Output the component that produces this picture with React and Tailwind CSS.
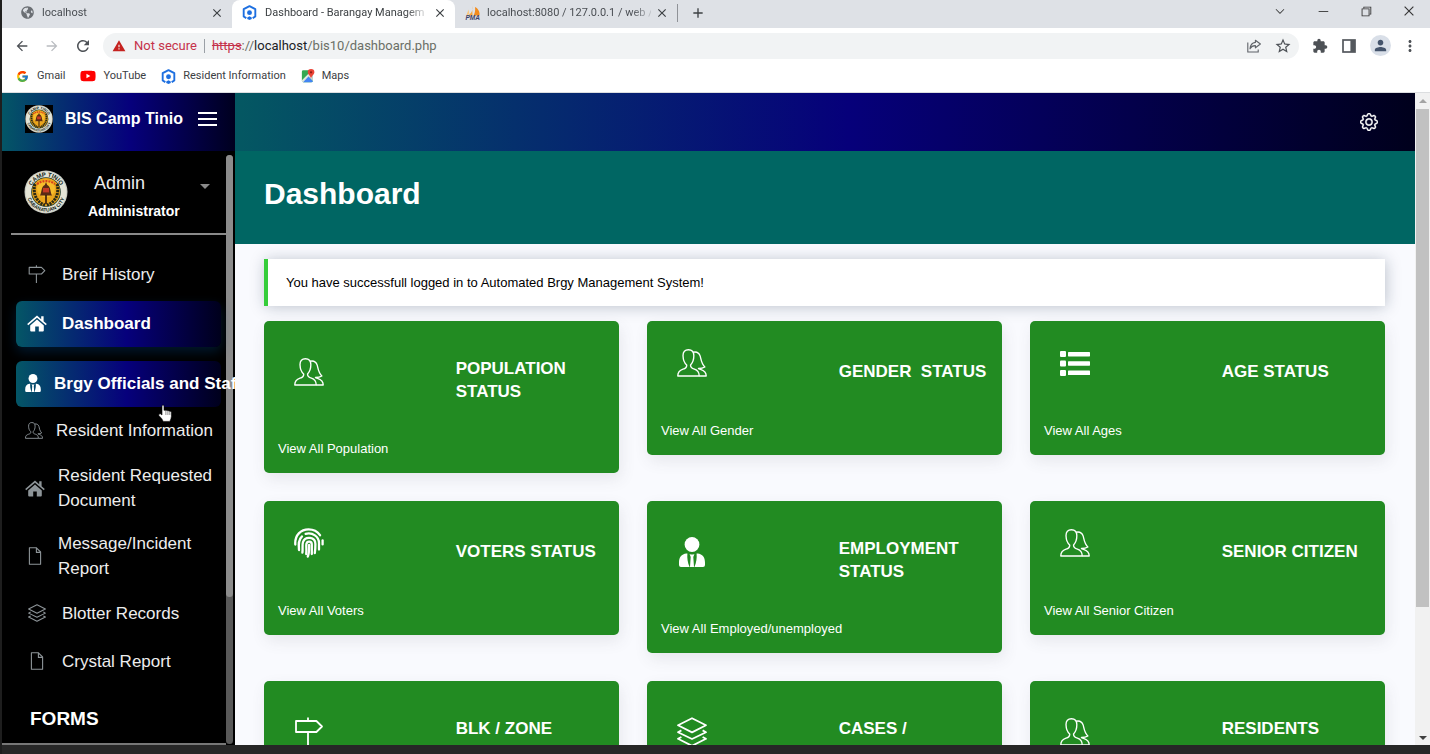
import React from "react";
import {
  MdArrowBack,
  MdArrowForward,
  MdRefresh,
  MdWarning,
  MdExtension,
  MdMoreVert,
  MdPerson,
  MdClose,
  MdAdd,
  MdStarBorder,
} from "react-icons/md";
import { FaGlobeAmericas, FaYoutube } from "react-icons/fa";
import { FcGoogle } from "react-icons/fc";
import { BsGear } from "react-icons/bs";
import {
  VscChromeMinimize,
  VscChromeRestore,
  VscChromeClose,
  VscChevronDown,
} from "react-icons/vsc";

/* ---------- icons ---------- */

function HexLogo() {
  return (
    <svg viewBox="0 0 16 16" className="size-[15px] shrink-0" aria-hidden="true">
      <path
        d="M4.6 14 L1.8 12.2 V4.4 L8 1.2 L14.2 4.4 V12.2 L11.4 14"
        fill="none"
        stroke="#1d6fe0"
        strokeWidth="2"
        strokeLinejoin="round"
      />
      <circle cx="8" cy="8.2" r="2.6" fill="#1d6fe0" />
      <path d="M5.6 13.2 L8 12 L10.4 13.2 V15 L8 16 L5.6 15 Z" fill="#1d6fe0" />
    </svg>
  );
}

function PmaLogo() {
  return (
    <svg viewBox="0 0 18 16" className="h-4 w-[18px] shrink-0" aria-hidden="true">
      <path d="M7 1 C8 5 7 8 3 10.5 H7.6 Z" fill="#f7a63a" />
      <path d="M10 2 C14 4 15 8 14.5 10.5 H8.6 C10 8 10.5 5 10 2 Z" fill="#f28b1c" />
      <path d="M3.5 4.5 L4.3 9 L1.4 10.5 Z" fill="#fbc77b" />
      <text
        x="0.5"
        y="15.4"
        fontSize="6.5"
        fontWeight="700"
        fontStyle="italic"
        fontFamily="Liberation Sans, sans-serif"
        fill="#3c3f66"
      >
        PMA
      </text>
    </svg>
  );
}

function MapsLogo() {
  return (
    <svg viewBox="0 0 16 16" className="size-[14px] shrink-0" aria-hidden="true">
      <rect x="1" y="1.5" width="12.5" height="13.5" rx="1.6" fill="#34a853" />
      <path d="M2 14.6 L8 8 L13.5 13.6 Q13.5 15 12 15 H2.6 Z" fill="#4285f4" />
      <path d="M8 8 L13.5 3 V13.6 Z" fill="#d5dbe2" />
      <path d="M1 12.8 L10.5 3.3 L12 4.8 L2.4 15 Q1 15 1 13.4 Z" fill="#dfe6df" />
      <path
        d="M11.5 0 A3.8 3.8 0 0 1 15.3 3.8 C15.3 6.4 12 7.6 11.5 11 C11 7.6 7.7 6.4 7.7 3.8 A3.8 3.8 0 0 1 11.5 0 Z"
        fill="#ea4335"
      />
      <circle cx="11.5" cy="3.8" r="1.3" fill="#8e1c14" />
    </svg>
  );
}

function ShareIcon() {
  return (
    <svg viewBox="0 0 16 16" className="size-4" fill="none" stroke="#5f6368" strokeWidth="1.1" aria-hidden="true">
      <path d="M1.8 4.6 V14 H12.2 V11.4" />
      <path d="M9.4 2.2 L14.4 6 L9.4 9.8 V7.6 C6.8 7.5 5.2 8.6 4 10.8 C4.3 7.4 6 4.8 9.4 4.4 Z" strokeLinejoin="round" />
    </svg>
  );
}

function SidePanelIcon() {
  return (
    <svg viewBox="0 0 14 14" className="size-[14px]" aria-hidden="true">
      <rect x="1" y="1" width="12" height="12" fill="none" stroke="#54585d" strokeWidth="1.7" />
      <rect x="8.4" y="1" width="4.6" height="12" fill="#54585d" />
    </svg>
  );
}

function Seal({ id, className }) {
  return (
    <svg viewBox="0 0 44 44" className={className} aria-hidden="true">
      <defs>
        <path id={id + "-top"} d="M6.6 22 A15.4 15.4 0 0 1 37.4 22" />
        <path id={id + "-bottom"} d="M2.4 22 A19.6 19.6 0 0 0 41.6 22" />
      </defs>
      <circle cx="22" cy="22" r="21.5" fill="#c9cbc2" />
      <circle cx="22" cy="22" r="20.4" fill="#e4e4d6" />
      <circle cx="22" cy="22" r="14.8" fill="#1f3a28" />
      <circle cx="22" cy="22" r="14" fill="#eba51c" />
      <circle cx="22" cy="18.5" r="9" fill="#f7bd2c" />
      <path
        d="M11 14 C8.5 23 12 32 21 35.2 M33 14 C35.5 23 32 32 23 35.2"
        fill="none"
        stroke="#2a2a15"
        strokeWidth="3"
        strokeDasharray="2.2 0.8"
      />
      <path d="M13 14 Q22 8 31 14" fill="none" stroke="#d9411e" strokeWidth="2.2" strokeDasharray="2 1" />
      <path d="M22 12 L23.2 15 C27 16.5 26 22 28 25.5 H16 C18 22 17 16.5 20.8 15 Z" fill="#5a2a14" />
      <rect x="19" y="18" width="6" height="4.4" fill="#c53b25" />
      <path d="M21.2 25 H22.8 V34 H21.2 Z" fill="#33180d" />
      <g fontFamily="Liberation Sans, sans-serif" fontWeight="700" fill="#12241a">
        <text fontSize="6">
          <textPath href={"#" + id + "-top"} startOffset="50%" textAnchor="middle">
            CAMP TINIO
          </textPath>
        </text>
        <text fontSize="5">
          <textPath href={"#" + id + "-bottom"} startOffset="50%" textAnchor="middle">
            CABANATUAN CITY
          </textPath>
        </text>
      </g>
    </svg>
  );
}

function PeopleIcon({ className, weight = 1.4 }) {
  return (
    <svg viewBox="0 0 31 29" className={className} fill="none" stroke="currentColor" strokeWidth={weight} strokeLinejoin="round" aria-hidden="true">
      <path d="M.8 28 C.6 23.4 3 22 6.2 20.9 C9.2 20 10.2 19.2 10 16.6 C7 14 6.3 11 6.2 7 C6.1 3 8.2 .8 11.8 .8 C15.4 .8 17.4 3 17.4 7 C17.4 11 16.4 14 14 16.6 C13.8 19.2 15 20 18 20.9 C21.4 22 23 23.6 23 28 Z" />
      <path d="M16.6 3.4 C20 2.6 22.8 4 24 7.4 C25 11 25 15 28.8 18.6 C27 19.8 24.6 20.2 22.2 20.2 C23.4 21.6 30.4 21.6 30.2 28 H23" />
    </svg>
  );
}

function UserTieIcon({ className }) {
  return (
    <svg viewBox="0 0 26 30" className={className} fill="currentColor" aria-hidden="true">
      <circle cx="13" cy="7.5" r="7.4" />
      <path d="M7.4 16.4 C2.4 17 0 20 0 25.6 V28 Q0 30 2 30 H10.6 C8.6 25.4 8 21 8.4 16.4 Z" />
      <path d="M18.6 16.4 C23.6 17 26 20 26 25.6 V28 Q26 30 24 30 H15.4 C17.4 25.4 18 21 17.6 16.4 Z" />
      <path d="M10.6 17 Q13 18.2 15.4 17 L14.3 20 L15 30 H11 L11.7 20 Z" />
    </svg>
  );
}

function ListIcon({ className }) {
  return (
    <svg viewBox="0 0 30 25" className={className} fill="currentColor" aria-hidden="true">
      <rect x="0" y="0" width="6" height="6" rx="1" />
      <rect x="8" y="1" width="22" height="4.4" rx=".6" />
      <rect x="0" y="9.5" width="6" height="6" rx="1" />
      <rect x="8" y="10.3" width="22" height="4.4" rx=".6" />
      <rect x="0" y="19" width="6" height="6" rx="1" />
      <rect x="8" y="19.6" width="22" height="4.4" rx=".6" />
    </svg>
  );
}

function FingerprintIcon({ className }) {
  return (
    <svg viewBox="0 0 30 30" className={className} fill="none" stroke="currentColor" strokeWidth="2.3" strokeLinecap="round" aria-hidden="true">
      <path d="M1.3 16.5 C.6 7 7 1.3 14.6 1.3 C19.6 1.3 23.4 3.4 26 7.2" />
      <path d="M28.6 12.4 V16.4" />
      <path d="M5 22 C4.6 17 4 12 8 8.4" />
      <path d="M11.6 5.8 C18.6 4 25 8.6 25 15 V21.6" />
      <path d="M8.4 24.6 C9 20.6 8 17 9 14 C11.2 7.8 21.4 8.6 21.4 16 C21.4 19.6 21.2 22.4 20.8 25" />
      <path d="M12.2 26 C12.8 22 12 18.8 12.4 16 C13 12.6 17.8 12.8 17.8 16.4 V26" />
      <path d="M15.1 17 C15.2 21 15 25.6 13.8 28.6" />
    </svg>
  );
}

function SignIcon({ className, weight = 1.8 }) {
  return (
    <svg viewBox="0 0 30 30" className={className} fill="none" stroke="currentColor" strokeWidth={weight} aria-hidden="true">
      <path d="M2 4 H22.4 L28 9.5 L22.4 15 H2 Z" strokeLinejoin="round" />
      <path d="M14 .4 V4 M14 15 V30" />
    </svg>
  );
}

function LayersIcon({ className, weight = 1.8 }) {
  return (
    <svg viewBox="0 0 30 30" className={className} fill="none" stroke="currentColor" strokeWidth={weight} strokeLinejoin="round" aria-hidden="true">
      <path d="M15 1.2 L29 8.2 L15 15.4 L1 8.2 Z" />
      <path d="M4.4 13.4 L1 15.2 L15 22 L29 15.2 L25.6 13.4" />
      <path d="M4.4 20 L1 21.8 L15 28.8 L29 21.8 L25.6 20" />
    </svg>
  );
}

function FileIcon({ className }) {
  return (
    <svg viewBox="0 0 14 18" className={className} fill="none" stroke="currentColor" strokeWidth="1.1" strokeLinejoin="round" aria-hidden="true">
      <path d="M1.4 .8 H8.4 L12.6 5 V17.2 H1.4 Z" />
      <path d="M8.4 .8 V5.4 H12.6" />
    </svg>
  );
}

function HouseIcon({ className }) {
  return (
    <svg viewBox="0 0 20 17" className={className} fill="currentColor" aria-hidden="true">
      <path d="M10 4.6 L3.2 10.4 V15.6 Q3.2 16.6 4.2 16.6 H8.2 V11.4 H11.8 V16.6 H15.8 Q16.8 16.6 16.8 15.6 V10.4 Z" />
      <path d="M10 .6 L14.2 4.2 V1.2 H16.6 V6.2 L19.8 9 L18.8 10.2 L10 2.8 L1.2 10.2 L.2 9 Z" />
    </svg>
  );
}

function HandCursor() {
  return (
    <svg viewBox="0 0 14 18" className="h-[18px] w-[14px]" fill="#fff" stroke="#000" strokeWidth=".6" aria-hidden="true">
      <path d="M4 1.6 Q5 .4 6 1.6 V6.4 Q7 5.6 7.9 6.6 Q9 5.9 9.9 7 Q11 6.4 11.8 7.4 Q13.2 7 13.4 8.4 V12.4 Q13.2 15 11.8 17.4 H5.2 Q4.4 14.8 .8 11.4 Q.4 9.4 2.4 9.8 L4 11 Z" />
      <path d="M7.9 7 V11 M9.9 7.4 V11 M11.8 7.8 V11" stroke="#444" />
    </svg>
  );
}

/* ---------- browser frame ---------- */

function Tab({ icon, title, active, box }) {
  return (
    <div
      className={
        "flex shrink-0 items-center pt-1 pb-[7px] pr-2 " +
        box +
        (active ? " rounded-t-lg bg-white text-[#3c4043]" : " text-[#4a4e53]")
      }
    >
      {icon}
      <a
        href="#tab"
        className="min-w-0 flex-1 text-[11px] leading-4 whitespace-nowrap [mask-image:linear-gradient(90deg,#000_88%,rgba(0,0,0,0.2))]"
      >
        {title}
      </a>
      <button type="button" aria-label={"Close " + title} className="text-[#3c4043]">
        <MdClose className="size-[14px]" />
      </button>
    </div>
  );
}

function BrowserFrame() {
  return (
    <div className="shrink-0 border-b border-[#dcdee0] bg-white font-['Roboto','Open_Sans',sans-serif]">
      <div className="flex h-7 items-stretch bg-[#dee1e6]">
        <div className="flex min-w-0 flex-1">
          <Tab
            box="w-[230px] gap-2 pl-[19px]"
            icon={<FaGlobeAmericas className="size-[13px] text-[#6b6f74]" />}
            title="localhost"
          />
          <Tab box="w-[223px] gap-2 pl-[10px]" active icon={<HexLogo />} title="Dashboard - Barangay Managem" />
          <Tab box="w-[222px] gap-1 pl-[10px]" icon={<PmaLogo />} title="localhost:8080 / 127.0.0.1 / web /" />
          <div className="mt-1 h-[18px] w-px bg-[#8f9297]" />
          <button type="button" aria-label="New tab" className="mb-[3px] ml-3 text-[#3c4043]">
            <MdAdd className="size-4" />
          </button>
        </div>
        <div className="flex items-center gap-[29px] pr-[14px] pb-[6px] text-[#333]">
          <button type="button" aria-label="Search tabs"><VscChevronDown className="size-[14px]" /></button>
          <button type="button" aria-label="Minimize"><VscChromeMinimize className="size-[14px]" /></button>
          <button type="button" aria-label="Restore"><VscChromeRestore className="size-[14px]" /></button>
          <button type="button" aria-label="Close window"><VscChromeClose className="size-[14px]" /></button>
        </div>
      </div>
      <div className="flex h-[35px] items-center pr-[11px] pl-3">
        <div className="flex w-[89px] gap-[14px] text-[#4d5156]">
          <button type="button" aria-label="Back"><MdArrowBack className="size-4" /></button>
          <button type="button" aria-label="Forward" className="text-[#b9bcc0]"><MdArrowForward className="size-4" /></button>
          <button type="button" aria-label="Reload"><MdRefresh className="size-[18px]" /></button>
        </div>
        <div className="flex h-[26px] min-w-0 flex-1 items-center rounded-full bg-[#f1f3f4] pr-[7px] pl-[9px]">
          <MdWarning className="size-[14px] text-[#c5221f]" />
          <span className="ml-2 text-[13px] text-[#c5324a]">Not secure</span>
          <span className="mx-[7px] h-[14px] w-px bg-[#9aa0a6]" />
          <a href="#address" className="flex-1 text-[13px] text-[#6b6f66]">
            <span className="text-[#c5324a] line-through">https</span>://
            <span className="text-[#202124]">localhost</span>/bis10/dashboard.php
          </a>
          <button type="button" aria-label="Share"><ShareIcon /></button>
          <button type="button" aria-label="Bookmark" className="ml-3 text-[#4d5156]"><MdStarBorder className="size-[18px]" /></button>
        </div>
        <div className="ml-[13px] flex items-center gap-[14px] text-[#4d5156]">
          <button type="button" aria-label="Extensions"><MdExtension className="size-4" /></button>
          <button type="button" aria-label="Side panel"><SidePanelIcon /></button>
          <button type="button" aria-label="Profile" className="grid size-[21px] place-items-center rounded-full bg-[#d9dfe8] text-[#44546c]">
            <MdPerson className="size-[17px]" />
          </button>
          <button type="button" aria-label="Menu" className="-ml-1"><MdMoreVert className="size-[18px]" /></button>
        </div>
      </div>
      <nav aria-label="Bookmarks" className="flex h-[29px] items-center gap-[15px] pb-[3px] pl-[14px] text-[11px] text-[#3c4043]">
        <a href="#gmail" className="flex items-center gap-2"><FcGoogle className="size-[13px]" />Gmail</a>
        <a href="#youtube" className="flex items-center gap-[7px]"><FaYoutube className="size-4 text-[#f00]" />YouTube</a>
        <a href="#resident" className="flex items-center gap-[7px]"><HexLogo />Resident Information</a>
        <a href="#maps" className="flex items-center gap-[7px]"><MapsLogo />Maps</a>
      </nav>
    </div>
  );
}

/* ---------- sidebar ---------- */

const thin = "size-[18px]";

const navItems = [
  { label: "Breif History", icon: <SignIcon className={thin} />, box: "h-[46px] pl-3 gap-4" },
  {
    label: "Dashboard",
    icon: <HouseIcon className="h-[17px] w-5" />,
    box: "mt-1 h-[46px] pb-[2px] pl-[11px] gap-[15px]",
    active: true,
    glow: "shadow-[0_5px_12px_rgba(0,70,130,0.35)]",
  },
  {
    label: "Brgy Officials and Staff",
    icon: <UserTieIcon className="h-[18px] w-4" />,
    box: "mt-[14px] h-[46px] pb-[2px] pl-[9px] gap-[13px]",
    active: true,
    glow: "",
  },
  { label: "Resident Information", icon: <PeopleIcon className="h-[17px] w-[18px]" weight={1.6} />, box: "h-[46px] pl-[9px] gap-[13px]" },
  { label: "Resident Requested Document", icon: <HouseIcon className="h-[17px] w-5" />, box: "mt-px py-[9px] pl-[9px] gap-[13px]" },
  { label: "Message/Incident Report", icon: <FileIcon className="h-[18px] w-[14px]" />, box: "py-[9px] pl-3 gap-4" },
  { label: "Blotter Records", icon: <LayersIcon className={thin} />, box: "h-[46px] pl-3 gap-4" },
  { label: "Crystal Report", icon: <FileIcon className="h-[18px] w-[14px]" />, box: "mt-[2px] h-[46px] pl-[14px] gap-[18px]" },
];

function NavItem({ item }) {
  return (
    <li>
      <a
        href="#nav"
        className={
          "flex items-center rounded-md text-[17px] leading-[25px] " +
          item.box +
          " " +
          (item.active
            ? "bg-linear-[90deg,#045666_0%,#06007c_54%,#00001c_100%] font-bold whitespace-nowrap text-white " + item.glow
            : "text-[#ededed]")
        }
      >
        <span className={"shrink-0 " + (item.active ? "text-white" : "text-[#8d9498]")}>{item.icon}</span>
        <span>{item.label}</span>
      </a>
    </li>
  );
}

function Sidebar() {
  return (
    <aside className="flex w-[233px] shrink-0 flex-col overflow-hidden bg-black text-white">
      <div className="flex h-[58px] shrink-0 items-center bg-linear-[90deg,#045666_0%,#06007c_55%,#00001f_100%] pb-[6px] pl-[23px]">
        <span className="bg-black">
          <Seal id="brand" className="size-7" />
        </span>
        <a href="#home" className="ml-3 w-[133px] text-[16px] leading-6 font-bold whitespace-nowrap">
          BIS Camp Tinio
        </a>
        <button type="button" aria-label="Toggle sidebar">
          <svg viewBox="0 0 19 16" className="h-4 w-[19px]" stroke="#fff" strokeWidth="2" aria-hidden="true">
            <path d="M0 2 H19 M0 8 H19 M0 14 H19" />
          </svg>
        </button>
      </div>
      <div className="flex min-h-0 flex-1">
        <div className="relative z-10 flex w-[224px] flex-col">
          <div className="ml-[9px] flex h-[84px] shrink-0 items-center border-b-2 border-[#8a8a8a] pl-[13px]">
            <Seal id="user" className="size-11" />
            <a href="#profile" className="ml-5 w-[112px] pt-[9px]">
              <span className="block pl-[6px] text-[18px] leading-7 text-[#ededed]">Admin</span>
              <span className="block text-[14px] leading-7 font-bold">Administrator</span>
            </a>
            <button type="button" aria-label="Account menu" className="mb-3">
              <svg viewBox="0 0 10 5" className="h-[5px] w-[10px]" fill="#8a8a8a" aria-hidden="true">
                <path d="M0 0 H10 L5 5 Z" />
              </svg>
            </button>
          </div>
          <nav aria-label="Main" className="relative min-h-0 flex-1 border-b-2 border-[#777]">
            <ul className="mt-4 mr-[5px] ml-[14px]">
              {navItems.map((item) => (
                <NavItem key={item.label} item={item} />
              ))}
            </ul>
            <h2 className="mt-[23px] ml-7 text-[19px] leading-6 font-bold">FORMS</h2>
            <div className="absolute top-[169px] left-[156px]">
              <HandCursor />
            </div>
          </nav>
        </div>
        <div className="mt-1 mb-px flex w-[7px] flex-col rounded-full bg-[#595959]">
          <div className="h-3/4 rounded-full bg-[#8c8c8c]" />
        </div>
      </div>
    </aside>
  );
}

/* ---------- dashboard ---------- */

const big = "w-[30px] h-[28px]";

const cards = [
  { title: "POPULATION STATUS", link: "View All Population", icon: <PeopleIcon className={big} />, titleBox: "w-[120px]" },
  { title: "GENDER \u00a0STATUS", link: "View All Gender", icon: <PeopleIcon className={big} />, titleBox: "whitespace-nowrap" },
  { title: "AGE STATUS", link: "View All Ages", icon: <ListIcon className="h-[25px] w-[30px]" />, titleBox: "" },
  { title: "VOTERS STATUS", link: "View All Voters", icon: <FingerprintIcon className="size-[30px]" />, titleBox: "" },
  { title: "EMPLOYMENT STATUS", link: "View All Employed/unemployed", icon: <UserTieIcon className="size-[30px]" />, titleBox: "w-[125px]" },
  { title: "SENIOR CITIZEN", link: "View All Senior Citizen", icon: <PeopleIcon className={big} />, titleBox: "whitespace-nowrap" },
  { title: "BLK / ZONE", icon: <SignIcon className="size-[30px]" />, titleBox: "h-[46px]" },
  { title: "CASES /", icon: <LayersIcon className="size-[30px]" />, titleBox: "h-[46px]" },
  { title: "RESIDENTS", icon: <PeopleIcon className={big} />, titleBox: "h-[46px]" },
];

function Card({ card }) {
  return (
    <article className="rounded-[5px] bg-[#228b22] pt-9 pb-[14px] text-white shadow-[2px_6px_15px_rgba(69,65,78,0.1)]">
      <div className="grid min-h-7 grid-cols-[54%_46%] items-center">
        <div className="-mt-4 pl-[30px]">{card.icon}</div>
        <h3 className={"text-[17px] leading-[23px] font-bold " + card.titleBox}>{card.title}</h3>
      </div>
      <div className="mt-9 min-h-5 pl-[14px] text-[13px] leading-5">
        {card.link && <a href="#view">{card.link}</a>}
      </div>
    </article>
  );
}

function Scrollbar() {
  return (
    <div className="flex w-[15px] shrink-0 flex-col items-center bg-[#f1f1f1]" aria-hidden="true">
      <svg viewBox="0 0 8 4" className="my-[6px] h-1 w-2" fill="#a3a3a3">
        <path d="M0 4 L4 0 L8 4 Z" />
      </svg>
      <div className="flex w-[13px] flex-1 flex-col">
        <div className="h-4/5 bg-[#c1c1c1]" />
      </div>
      <svg viewBox="0 0 8 4" className="my-[5px] h-1 w-2" fill="#404040">
        <path d="M0 0 H8 L4 4 Z" />
      </svg>
    </div>
  );
}

export default function App() {
  return (
    <div className="flex h-screen flex-col overflow-hidden border-l-2 border-[#1e1e1e] font-['Liberation_Sans',Arial,sans-serif]">
      <BrowserFrame />
      <div className="flex min-h-0 flex-1">
        <Sidebar />
        <div className="flex min-w-0 flex-1 flex-col overflow-hidden bg-[#f9fafe]">
          <header className="flex h-[58px] shrink-0 items-center justify-end bg-linear-[90deg,#045862_0%,#06007a_52%,#00001c_100%] pr-[37px]">
            <button type="button" aria-label="Settings" className="text-white">
              <BsGear className="size-[18px]" stroke="currentColor" strokeWidth="0.4" />
            </button>
          </header>
          <main className="min-h-0 flex-1">
            <div className="h-[93px] bg-[#006663] px-[29px] pt-[23px]">
              <h1 className="text-[30px] leading-10 font-bold text-white">Dashboard</h1>
            </div>
            <div className="pt-[15px] pr-[30px] pl-[29px]">
              <div
                role="status"
                className="border-l-4 border-[#35cd3a] bg-white py-[14px] pl-[18px] text-[13px] leading-[19px] text-black shadow-[1px_1px_14px_rgba(18,38,63,0.26)]"
              >
                You have successfull logged in to Automated Brgy Management System!
              </div>
              <div className="mt-[15px] grid grid-cols-3 items-start gap-7">
                {cards.map((card) => (
                  <Card key={card.title} card={card} />
                ))}
              </div>
            </div>
          </main>
        </div>
        <Scrollbar />
      </div>
      <div className="h-[9px] shrink-0 bg-[#272727]" />
    </div>
  );
}
